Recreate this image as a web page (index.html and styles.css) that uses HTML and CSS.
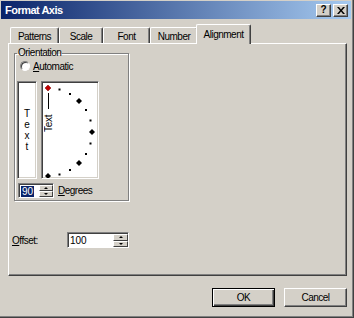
FILE: index.html
```html
<!DOCTYPE html>
<html lang="en">
<head>
    <meta charset="UTF-8">
    <title>Format Axis</title>
    <link rel="stylesheet" href="styles.css">
</head>
<body>
    <div class="window">
        <div class="titlebar">
            <span class="title">Format Axis</span>
            <div class="caption-buttons">
                <span class="caption-btn help">?</span>
                <span class="caption-btn close">
                    <svg width="8" height="7" viewBox="0 0 8 7"><path d="M0 0h2l2 2.5L6 0h2L5 3.5 8 7H6L4 4.5 2 7H0l3-3.5z" fill="#000"/></svg>
                </span>
            </div>
        </div>
        <div class="content">
            <div class="tabs">
                <div class="tab" style="width:49px">Patterns</div>
                <div class="tab" style="width:44px">Scale</div>
                <div class="tab" style="width:47px">Font</div>
                <div class="tab" style="width:48px">Number</div>
                <div class="tab active" style="width:55px">Alignment</div>
            </div>
            <div class="panel">
                <fieldset class="orientation">
                    <legend>Orientation</legend>
                    <div class="radio-row">
                        <span class="radio"></span>
                        <span><u>A</u>utomatic</span>
                    </div>
                    <div class="orient-boxes">
                        <div class="vertical-text">
                            <span>T</span><span>e</span><span>x</span><span>t</span>
                        </div>
                        <div class="dial">
                            <svg width="54" height="94" viewBox="0 0 54 94">
                                <line x1="4.5" y1="9" x2="4.5" y2="25" stroke="#000" stroke-width="1"/>
                                <text x="47" y="4.5" transform="rotate(-90 4 48) translate(-43 43.5)" font-family="Liberation Sans, Arial, sans-serif" font-size="10" dominant-baseline="central" letter-spacing="-0.3">Text</text>
                                <!-- small dots every 15 degrees -->
                                <rect x="14.5" y="4.5" width="2" height="2"/>
                                <rect x="25" y="9" width="2" height="2"/>
                                <rect x="41" y="25" width="2" height="2"/>
                                <rect x="45.5" y="35.5" width="2" height="2"/>
                                <rect x="45.5" y="58.5" width="2" height="2"/>
                                <rect x="41" y="69" width="2" height="2"/>
                                <rect x="25" y="85" width="2" height="2"/>
                                <rect x="14.5" y="89.5" width="2" height="2"/>
                                <!-- big diamonds -->
                                <polygon points="35,14 38,17 35,20 32,17"/>
                                <polygon points="48,45 51,48 48,51 45,48"/>
                                <polygon points="35,76 38,79 35,82 32,79"/>
                                <polygon points="4,89 7,92 4,95 1,92"/>
                                <polygon points="4,1 7,4 4,7 1,4" fill="#c00000" stroke="#800000" stroke-width="0.5"/>
                            </svg>
                        </div>
                    </div>
                    <div class="degrees-row">
                        <div class="spinner degrees-spin">
                            <div class="spin-field"><span class="selected">90</span></div>
                            <div class="spin-buttons">
                                <span class="spin-btn"><i class="arrow-up"></i></span>
                                <span class="spin-btn"><i class="arrow-down"></i></span>
                            </div>
                        </div>
                        <span class="degrees-label"><u>D</u>egrees</span>
                    </div>
                </fieldset>
                <div class="offset-row">
                    <span class="offset-label"><u>O</u>ffset:</span>
                    <div class="spinner offset-spin">
                        <div class="spin-field">100</div>
                        <div class="spin-buttons">
                            <span class="spin-btn"><i class="arrow-up"></i></span>
                            <span class="spin-btn"><i class="arrow-down"></i></span>
                        </div>
                    </div>
                </div>
            </div>
            <div class="dialog-buttons">
                <div class="btn default">OK</div>
                <div class="btn">Cancel</div>
            </div>
        </div>
    </div>
</body>
</html>
```

FILE: styles.css
```css
body {
    margin: 0;
    font-family: 'Liberation Sans', Arial, sans-serif;
    font-size: 10px;
    letter-spacing: -0.5px;
    color: #000;
    background: #d4d0c8;
}
.window {
    width: 354px;
    height: 318px;
    box-sizing: border-box;
    background: #d4d0c8;
    padding: 1px 0 0 1px;
    border-right: 1px solid #404040;
    border-bottom: 1px solid #404040;
    box-shadow: inset -1px -1px 0 #808080;
    display: flex;
    flex-direction: column;
}
.titlebar {
    height: 18px;
    margin-right: 2px;
    background: linear-gradient(to right, #0a246a, #a6caf0);
    display: flex;
    align-items: center;
    justify-content: space-between;
    padding: 0 3px 0 4px;
}
.title {
    color: #fff;
    font-weight: bold;
    font-size: 11px;
}
.caption-buttons {
    display: flex;
    gap: 2px;
}
.caption-btn {
    width: 13px;
    height: 11px;
    background: #d4d0c8;
    border: 1px solid;
    border-color: #fff #404040 #404040 #fff;
    box-shadow: inset -1px -1px 0 #808080;
    display: flex;
    align-items: center;
    justify-content: center;
    font-weight: bold;
    font-size: 10px;
    letter-spacing: 0;
    line-height: 1;
}
.content {
    padding: 6px 6px 0 7px;
}
.tabs {
    display: flex;
    align-items: flex-end;
    height: 18px;
    padding-left: 2px;
}
.tab {
    height: 16px;
    box-sizing: border-box;
    border: 1px solid #fff;
    border-bottom: none;
    border-right-color: #404040;
    box-shadow: inset -1px 0 0 #808080;
    border-radius: 2px 2px 0 0;
    display: flex;
    align-items: center;
    justify-content: center;
    padding-top: 1px;
}
.tab.active {
    height: 20px;
    margin: 0 -2px -1px -2px;
    background: #d4d0c8;
    position: relative;
    z-index: 1;
    padding-bottom: 2px;
}
.panel {
    height: 233px;
    box-sizing: border-box;
    border: 1px solid;
    border-color: #fff #404040 #404040 #fff;
    box-shadow: inset -1px -1px 0 #808080;
    padding: 0 3px;
}
.orientation {
    width: 115px;
    box-sizing: border-box;
    margin: 3px 0 0 2px;
    padding: 0 2px 2px 2px;
    border: 1px solid #808080;
    box-shadow: inset 1px 1px 0 #fff, 1px 1px 0 #fff;
}
.orientation legend {
    padding: 0 1px;
    line-height: 12px;
}
.radio-row {
    display: flex;
    align-items: center;
    gap: 3px;
    height: 12px;
    margin-top: 1px;
    padding-left: 3px;
}
.radio {
    width: 10px;
    height: 10px;
    box-sizing: border-box;
    border-radius: 50%;
    background: #fff;
    border: 1px solid;
    border-color: #808080 #fff #fff #808080;
    box-shadow: inset 1px 1px 0 #404040;
}
.orient-boxes {
    display: flex;
    gap: 4px;
    margin-top: 9px;
    height: 98px;
}
.vertical-text,
.dial {
    box-sizing: border-box;
    background: #fff;
    border: 1px solid;
    border-color: #808080 #fff #fff #808080;
    box-shadow: inset 1px 1px 0 #404040, inset -1px -1px 0 #d4d0c8;
}
.vertical-text {
    width: 20px;
    display: flex;
    flex-direction: column;
    align-items: center;
    justify-content: center;
    line-height: 11px;
    letter-spacing: 0;
}
.dial {
    width: 58px;
    padding: 2px;
}
.dial svg {
    display: block;
}
.degrees-row {
    display: flex;
    align-items: center;
    gap: 4px;
    margin-top: 4px;
    padding-left: 1px;
}
.spinner {
    display: flex;
    box-sizing: border-box;
    height: 15px;
    background: #fff;
    border: 1px solid;
    border-color: #808080 #fff #fff #808080;
    box-shadow: inset 1px 1px 0 #404040;
    padding: 1px 0 0 1px;
}
.degrees-spin {
    width: 36px;
}
.offset-spin {
    width: 62px;
    height: 16px;
}
.spin-field {
    flex: 1;
    display: flex;
    align-items: center;
    padding-left: 1px;
    letter-spacing: 0;
}
.selected {
    background: #0a246a;
    color: #fff;
    padding: 0 1px;
    line-height: 11px;
}
.spin-buttons {
    width: 14px;
    display: flex;
    flex-direction: column;
}
.offset-spin .spin-buttons {
    width: 15px;
}
.spin-btn {
    flex: 1;
    background: #d4d0c8;
    box-sizing: border-box;
    border: 1px solid;
    border-color: #fff #404040 #404040 #fff;
    display: flex;
    align-items: center;
    justify-content: center;
}
.arrow-up,
.arrow-down {
    width: 0;
    height: 0;
    border-left: 2px solid transparent;
    border-right: 2px solid transparent;
}
.arrow-up {
    border-bottom: 2px solid #000;
}
.arrow-down {
    border-top: 2px solid #000;
}
.offset-row {
    display: flex;
    align-items: center;
    margin-top: 31px;
    height: 16px;
}
.offset-label {
    width: 55px;
}
.dialog-buttons {
    display: flex;
    justify-content: flex-end;
    gap: 9px;
    margin-top: 12px;
}
.btn {
    width: 63px;
    height: 19px;
    box-sizing: border-box;
    border: 1px solid;
    border-color: #fff #404040 #404040 #fff;
    box-shadow: inset -1px -1px 0 #808080;
    display: flex;
    align-items: center;
    justify-content: center;
}
.btn.default {
    border-color: #000;
    box-shadow: inset 1px 1px 0 #fff, inset -1px -1px 0 #404040, inset -2px -2px 0 #808080;
}
```
